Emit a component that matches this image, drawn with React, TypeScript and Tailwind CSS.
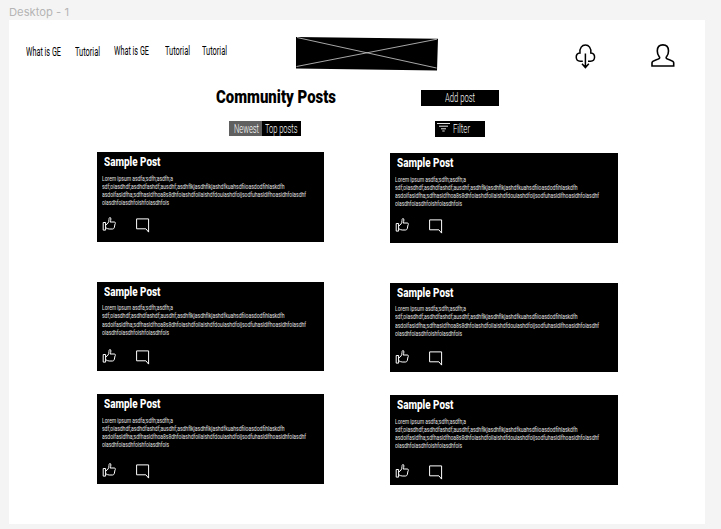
import { useLayoutEffect, useRef, useState } from 'react';

// Condenses a line of text horizontally so it occupies the given width.
function Condensed({ text, width, className = '' }: { text: string; width: number; className?: string }) {
  const ref = useRef<HTMLSpanElement>(null);
  const [scale, setScale] = useState(1);
  useLayoutEffect(() => {
    if (ref.current) setScale(width / ref.current.getBoundingClientRect().width * scale);
  }, [text, width]);
  return (
    <span className={`block whitespace-nowrap ${className}`} style={{ width }}>
      <span ref={ref} className="inline-block origin-left" style={{ transform: `scaleX(${scale})` }}>
        {text}
      </span>
    </span>
  );
}

const nav = [
  { text: 'What is GE', width: 35, cls: 'ml-[16.5px] mt-[1px]' },
  { text: 'Tutorial', width: 25, cls: 'ml-[14px] mt-[1px]' },
  { text: 'What is GE', width: 35, cls: 'ml-[14px]' },
  { text: 'Tutorial', width: 25, cls: 'ml-[16px]' },
  { text: 'Tutorial', width: 25, cls: 'ml-[12px]' },
];

const lines = [
  { text: 'Lorem ipsum asdfa;sdfh;asdfh;a', width: 71 },
  { text: 'sdf;oiasdhdf;asdhdfashdf;ausdhf;asdhflkjasdhflkjashdfkuahsdfiioasdodfihlaskdfh', width: 182.5 },
  { text: 'asdoifasldfha;sdfhasldfhoa8s8dhfoiashdfoilaishdfdouiashdfoijsodfuhasldifhoasidhfoiasdhf', width: 204 },
  { text: 'oiasdhfoiasdhfoishfoiasdhfois', width: 67 },
];

function Post({ iconGap }: { iconGap: string }) {
  return (
    <article className="h-[89.5px] w-[227.5px] bg-black pt-[2px] text-white">
      <h2 className="pl-[7px]">
        <Condensed text="Sample Post" width={56.5} className="text-[13px] leading-[16px] font-extrabold" />
      </h2>
      <div className="pt-[4.5px] pl-[5px]">
        {lines.map((l) => (
          <Condensed key={l.text} text={l.text} width={l.width} className="text-[8px] leading-[8.15px] text-[#e4e4e4]" />
        ))}
      </div>
      <div className={`flex pl-[5px] ${iconGap}`}>
        <svg className="h-[15px] w-[15px]" viewBox="0 0 15 15" fill="none" stroke="white" strokeWidth="1">
          <path d="M1.2 6.5h2.4v7.6H1.2zM3.6 9c2-.8 3.4-2.7 3.4-5.6C7 .9 8.8.9 8.9 2.9c0 1.2-.4 2.2-.8 3.1h4.1c1.4 0 1.6 1.3.8 1.9l-.6 3.2c-.3 1.3-.9 1.9-1.9 1.9H7.2c-1.4 0-2.4-.6-3.6-1.4" />
        </svg>
        <svg className="mt-[2px] ml-[19px] h-[15px] w-[14px]" viewBox="0 0 14 15" fill="none" stroke="white" strokeWidth="1">
          <path d="M.6.9h12v13.2L9.9 10.8H.6z" />
        </svg>
      </div>
    </article>
  );
}

function PostRow({ iconGap }: { iconGap: string }) {
  return (
    <div className="flex gap-[66px] pl-[87.5px]">
      <Post iconGap={iconGap} />
      <div className="pt-px">
        <Post iconGap={iconGap} />
      </div>
    </div>
  );
}

export default function App() {
  return (
    <div className="h-[529px] w-[721px] overflow-hidden bg-[#f4f4f4] pl-[9px] font-['Roboto',sans-serif] text-black">
      <div className="h-[20px] pt-[5px]">
        <Condensed text="Desktop - 1" width={60} className="font-['Inter',sans-serif] text-[11px] leading-[14px] text-[#b5b5b5]" />
      </div>
      <main className="h-[504px] w-[696px] bg-white">
        <header className="flex h-[68px] items-start">
          <nav className="flex w-[287px] shrink-0 pt-[22px]">
            {nav.map((n, i) => (
              <a key={i} className={n.cls}>
                <Condensed text={n.text} width={n.width} className="text-[13.5px] leading-[16px]" />
              </a>
            ))}
          </nav>
          <svg className="mt-[17px] h-[34px] w-[143px] shrink-0" viewBox="0 0 143 34">
            <path d="M0 0 142 1.8 141 33.5 0 31.5z" />
            <path d="M1 .5 140.5 31M.5 29.5 141 2.2" stroke="#d0d0d0" strokeWidth=".8" />
          </svg>
          <svg className="mt-[24px] ml-[136px] h-[26px] w-[22px] shrink-0" viewBox="0 0 22 26" fill="none" stroke="black" strokeWidth="1.5">
            <path d="M7.8 17.3H5.2C.2 17.2-.3 9.6 5 9 4.4 4 7 1.1 10.4 1.1S16.4 4 15.8 9c5.3.6 4.8 8.2-.2 8.3H13M10.4 9.5v14M7 19.8l3.4 3.8 3.4-3.8" />
          </svg>
          <svg className="mt-[24px] ml-[53.5px] h-[24px] w-[24px] shrink-0" viewBox="0 0 24 24" fill="none" stroke="black" strokeWidth="1.6">
            <path d="M1 22h21.7v-3.3c0-2-5.4-2.9-7-4.1-.8-.6-.7-1.3 0-2.1 1.2-1.5 1.8-3.2 1.8-5.5 0-4-1.9-6.1-5.6-6.1S6.3 3 6.3 7c0 2.3.6 4 1.8 5.5.7.8.8 1.5 0 2.1-1.6 1.2-7.1 2.1-7.1 4.1z" />
          </svg>
        </header>
        <div className="flex h-[32.5px] pl-[207px]">
          <h1 className="-mt-[2px]">
            <Condensed text="Community Posts" width={120} className="text-[19px] leading-[22px] font-black" />
          </h1>
          <button className="mt-[2px] ml-[84.5px] flex h-[15.5px] w-[78.5px] items-center justify-center bg-black text-white">
            <Condensed text="Add post" width={30} className="text-[13px] leading-[15px] font-light" />
          </button>
        </div>
        <div className="flex h-[31.8px] pl-[220.4px]">
          <div className="flex h-[15.5px] text-white">
            <button className="flex w-[32.5px] items-center bg-[#606060] pl-[5px]">
              <Condensed text="Newest" width={25} className="text-[13px] leading-[15px] font-light" />
            </button>
            <button className="flex w-[39.5px] items-center bg-black pl-[3.5px]">
              <Condensed text="Top posts" width={32.5} className="text-[13px] leading-[15px] font-light" />
            </button>
          </div>
          <button className="mt-[0.5px] ml-[134px] flex h-[15.5px] w-[49.5px] items-start bg-black text-white">
            <svg className="mt-[2px] ml-[2px] h-[10px] w-[13px]" viewBox="0 0 13 10" stroke="white" strokeWidth=".9">
              <path d="M0 .5h13M2 3.2h9M4 5.8h5M5.3 8h2.4" />
            </svg>
            <Condensed text="Filter" width={17} className="ml-[3px] text-[13px] leading-[15px] font-light" />
          </button>
        </div>
        <PostRow iconGap="pt-[8.5px]" />
        <div className="pt-[39px]">
          <PostRow iconGap="pt-[11px]" />
        </div>
        <div className="pt-[22px]">
          <PostRow iconGap="pt-[12.5px]" />
        </div>
      </main>
    </div>
  );
}
